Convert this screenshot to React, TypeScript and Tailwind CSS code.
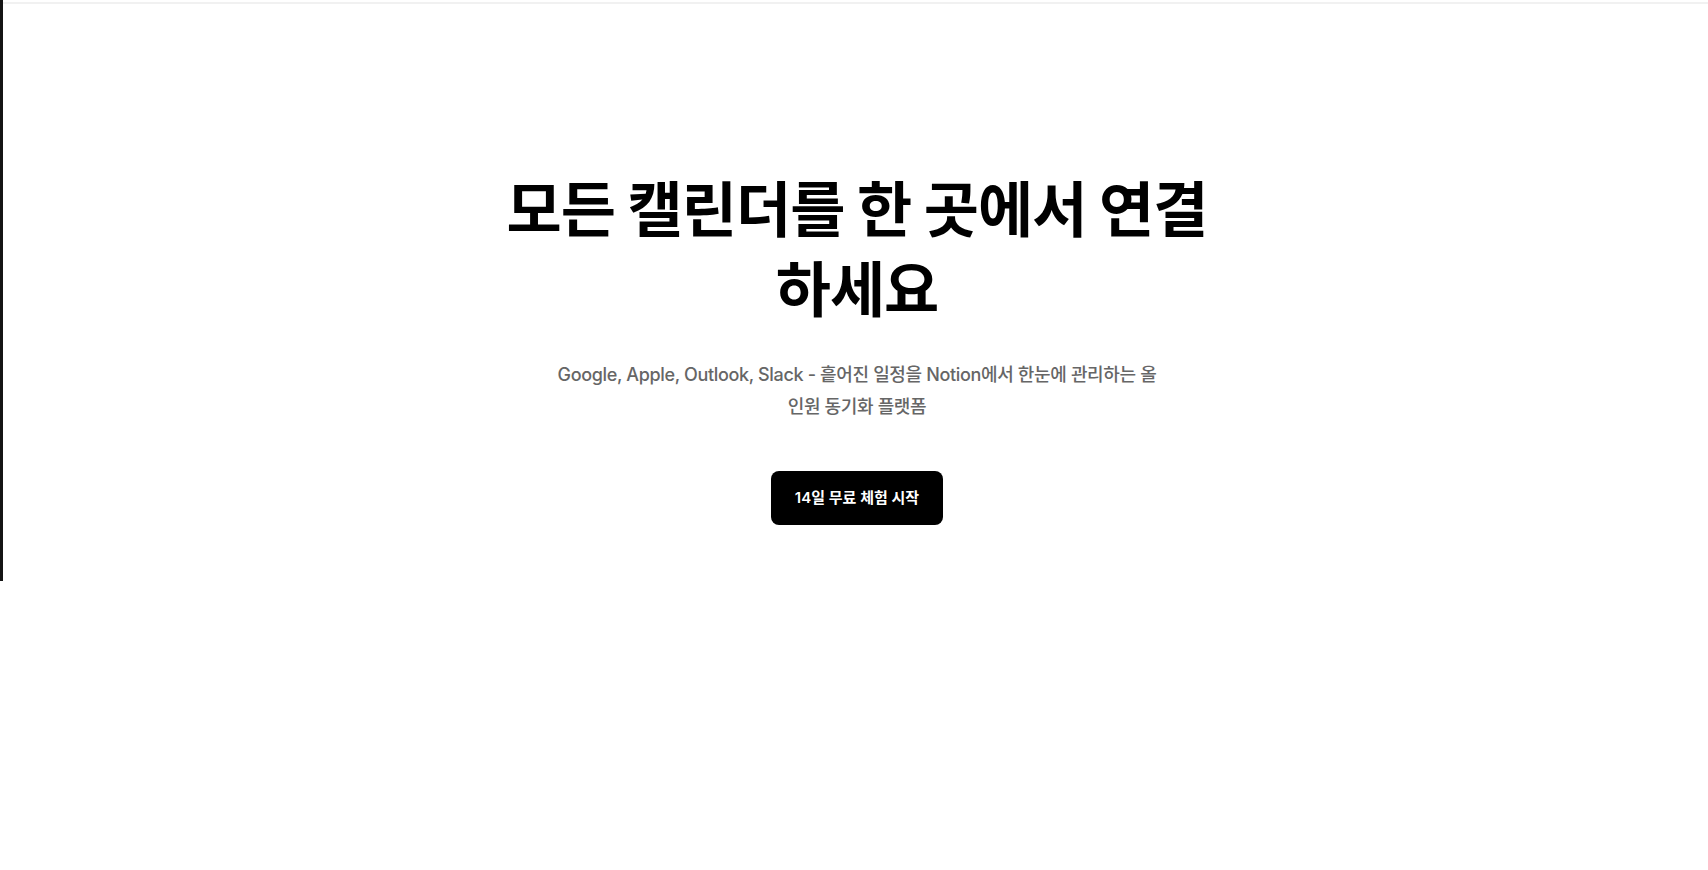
export default function App() {
  return (
    <div className="min-h-screen w-full bg-white" style={{ fontFamily: 'Inter, "Noto Sans CJK KR", sans-serif' }}>
      <section className="h-[581px] w-full border-l-[3px] border-[#141414] pt-[2px]">
        <div className="h-[2px] w-full bg-[#f1f1f1]" />
        <div className="flex flex-col items-center pl-[3px] pt-[162px]">
          <h1
            className="max-w-[724px] text-center text-[60px] leading-[80px] font-bold tracking-[-1px] text-black"
            style={{ fontFamily: '"Noto Sans CJK KR", sans-serif' }}
          >
            모든 캘린더를 한 곳에서 연결하세요
          </h1>
          <p className="mt-[33px] max-w-[600px] text-center text-[18px] leading-[32px] font-medium tracking-[-0.35px] text-[#666666]">
            Google, Apple, Outlook, Slack - 흩어진 일정을 Notion에서 한눈에 관리하는 올인원 동기화 플랫폼
          </p>
          <button className="mt-[48px] flex h-[54px] w-[172px] items-center justify-center rounded-lg bg-black text-[15px] font-semibold text-white">
            14일 무료 체험 시작
          </button>
        </div>
      </section>
    </div>
  );
}
